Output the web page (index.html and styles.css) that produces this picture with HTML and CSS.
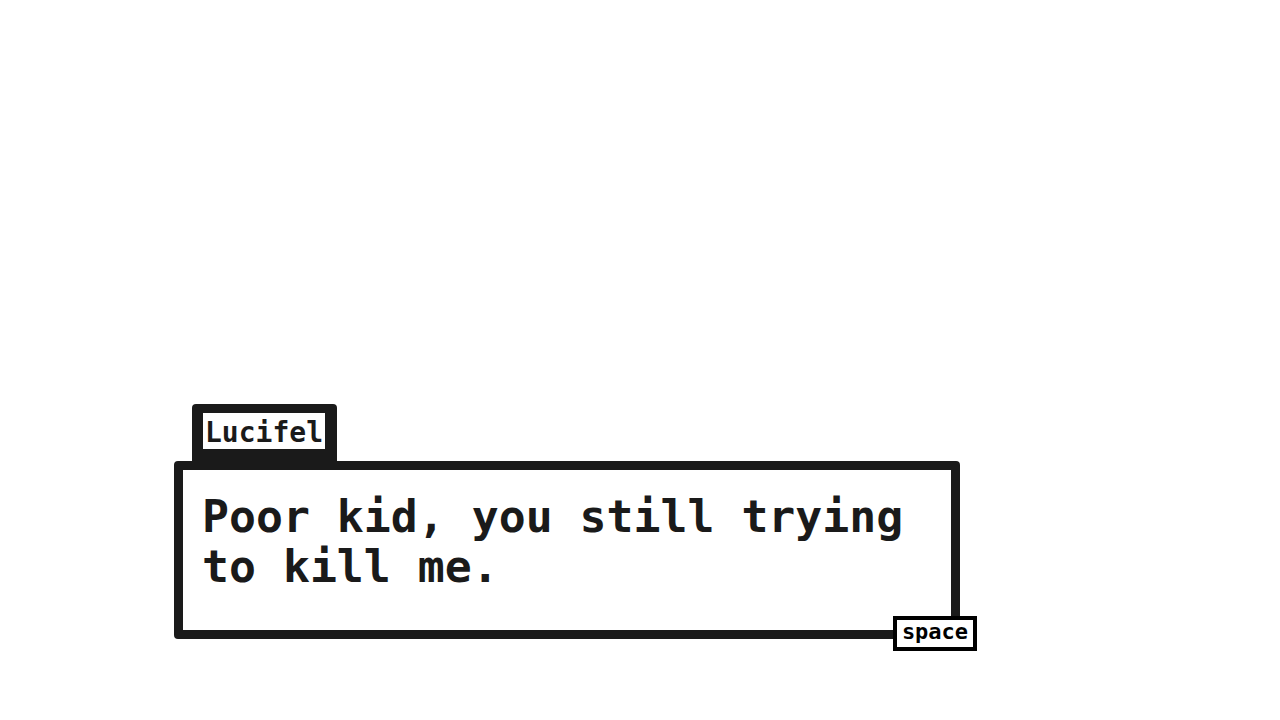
FILE: index.html
```html
<!DOCTYPE html>
<html lang="en">
<head>
<meta charset="utf-8">
<title>Dialogue</title>
<link rel="stylesheet" href="styles.css">
</head>
<body>
<div class="stage">
  <div class="dialogue">
    <div class="nametag"><span class="name">Lucifel</span></div>
    <div class="box">
      <p class="line">Poor kid, you still trying to kill me.</p>
      <div class="key"><span>space</span></div>
    </div>
  </div>
</div>
</body>
</html>
```
FILE: styles.css
```css
html, body {
  margin: 0;
  padding: 0;
  background: #ffffff;
}
.stage {
  width: 1280px;
  height: 720px;
  box-sizing: border-box;
  padding: 404px 0 0 174px;
  font-family: "DejaVu Sans Mono", "Liberation Mono", monospace;
  font-weight: bold;
  color: #1a1a1a;
}
.dialogue {
  display: flex;
  flex-direction: column;
  align-items: flex-start;
}
.nametag {
  margin-left: 18px;
  background: #1a1a1a;
  border-radius: 4px 4px 0 0;
  padding: 9px 12px 12px 11px;
  display: flex;
}
.name {
  background: #ffffff;
  font-size: 28px;
  line-height: 36px;
  height: 36px;
  box-sizing: border-box;
  padding: 2px 2px 0 2px;
}
.box {
  position: relative;
  width: 786px;
  height: 178px;
  box-sizing: border-box;
  border: 9px solid #1a1a1a;
  border-radius: 4px;
  padding: 22px 19px 0 19px;
}
.line {
  margin: 0;
  font-size: 44.8px;
  line-height: 50px;
  width: 720px;
}
.key {
  position: absolute;
  right: -26px;
  bottom: -21px;
  width: 84px;
  height: 35px;
  box-sizing: border-box;
  border: 4px solid #000000;
  background: #ffffff;
  display: flex;
  align-items: center;
  justify-content: center;
  padding-bottom: 3px;
  font-size: 22px;
  line-height: 24px;
  color: #000000;
}
```
